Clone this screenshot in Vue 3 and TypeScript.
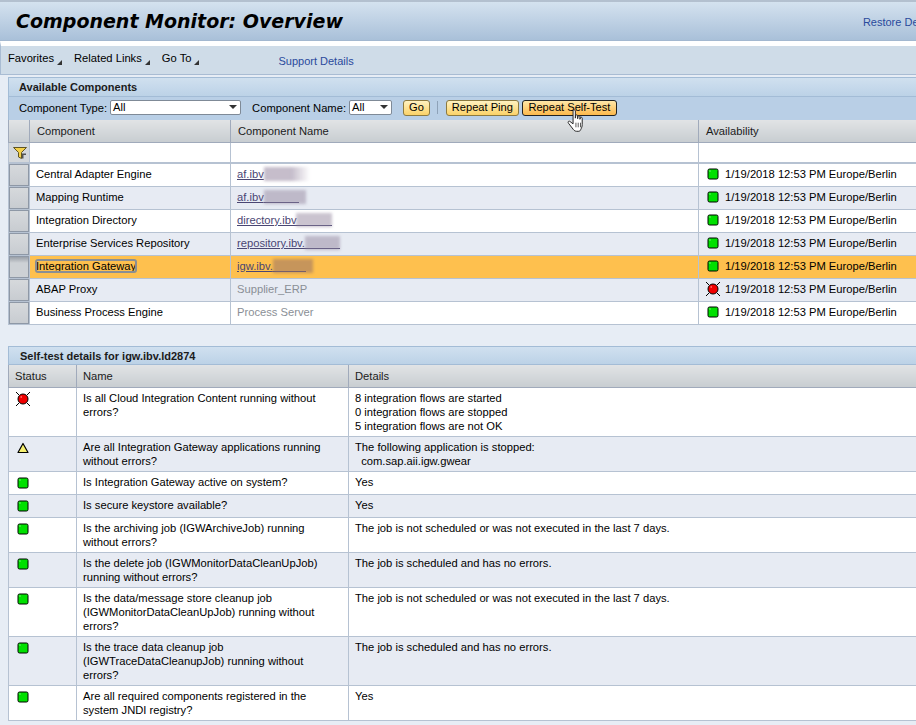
<template>
  <div class="page">
    <header class="title-bar">
      <h1 class="page-title">Component Monitor: Overview</h1>
      <a class="restore-link">Restore Default View</a>
    </header>

    <nav class="menu-bar">
      <div class="menu-items">
        <span v-for="item in menuItems" :key="item" class="menu-item">
          {{ item }}<i class="menu-arrow"></i>
        </span>
      </div>
      <a class="support-link">Support Details</a>
    </nav>

    <section class="panel components-panel">
      <div class="panel-title">Available Components</div>
      <div class="toolbar">
        <label class="field-label">Component Type:</label>
        <div class="select select-type">All<i class="select-arrow"></i></div>
        <label class="field-label field-name">Component Name:</label>
        <div class="select select-name">All<i class="select-arrow"></i></div>
        <button type="button" class="btn btn-go">Go</button>
        <span class="toolbar-sep"></span>
        <button type="button" class="btn">Repeat Ping</button>
        <button type="button" class="btn btn-hover">
          Repeat Self-Test
          <svg class="hand-cursor" width="19" height="24" viewBox="0 0 16 21">
            <path
              d="M5 1.500c0-1 2-1 2 0V8l.3-2.200c.2-1 1.700-.9 1.700.1V8.500l.3-2c.2-.9 1.700-.8 1.700.2v2.300l.4-1.300c.3-.8 1.600-.6 1.600.4v5.400c0 2-.6 3-1.300 4.500-.4 1-1 1.500-1.700 1.500H8c-1 0-2-.6-2.700-1.500L1 12.500c-.8-1-.1-2.200 1-1.800L5 13z"
              fill="#fff"
              stroke="#222"
              stroke-width=".85"
            />
            <path d="M7.500 12v4M9.500 12v4M11.500 12v4" stroke="#333" stroke-width=".7" />
          </svg>
        </button>
      </div>

      <table class="grid comp-grid">
        <colgroup>
          <col class="c-sel" />
          <col class="c-comp" />
          <col class="c-name" />
          <col />
        </colgroup>
        <thead>
          <tr>
            <th class="sel-head"></th>
            <th>Component</th>
            <th>Component Name</th>
            <th>Availability</th>
          </tr>
        </thead>
        <tbody>
          <tr class="filter-row">
            <td class="filter-cell">
              <svg class="filter-icon" width="14" height="12" viewBox="0 0 14 12">
                <path d="M.5.5h13L8.500 5.500V11.500L5.500 10V5.500z" fill="#f4d04a" stroke="#5f5422" stroke-width="1" />
                <path d="M9 6.500h4V8h-2.500v3.500H9z" fill="#555" />
              </svg>
            </td>
            <td></td>
            <td></td>
            <td></td>
          </tr>
          <tr
            v-for="(row, i) in components"
            :key="row.type"
            :class="{ alt: i % 2 === 1, selected: row.selected }"
          >
            <td class="sel-cell"><span class="sel-btn"></span></td>
            <td>
              <span :class="{ focused: row.selected }">{{ row.type }}</span>
            </td>
            <td>
              <span v-if="row.link" class="comp-link">
                {{ row.name }}<i
                  class="masked"
                  :style="{ width: row.blur + 'px', backgroundSize: row.line + 'px 1px' }"
                ><i class="smudge" :class="{ fade: row.line === 0 }"></i></i>
              </span>
              <span v-else class="muted">{{ row.name }}</span>
            </td>
            <td class="avail-cell">
              <StatusIcon :kind="row.status" />
              <span>1/19/2018 12:53 PM Europe/Berlin</span>
            </td>
          </tr>
        </tbody>
      </table>
    </section>

    <section class="panel details-panel">
      <div class="panel-title">Self-test details for igw.ibv.ld2874</div>
      <table class="grid detail-grid">
        <colgroup>
          <col class="c-status" />
          <col class="c-check" />
          <col />
        </colgroup>
        <thead>
          <tr>
            <th>Status</th>
            <th>Name</th>
            <th>Details</th>
          </tr>
        </thead>
        <tbody>
          <tr v-for="(row, i) in details" :key="row.check" :class="{ alt: i % 2 === 1 }">
            <td class="status-cell"><StatusIcon :kind="row.status" /></td>
            <td class="check-cell">{{ row.check }}</td>
            <td class="detail-cell">{{ row.detail }}</td>
          </tr>
        </tbody>
      </table>
    </section>
  </div>
</template>

<script setup lang="ts">
import { h } from 'vue';

type Status = 'ok' | 'warn' | 'error';

// small traffic light icons used in both tables
function StatusIcon(props: { kind: Status }) {
  if (props.kind === 'ok') {
    return h('svg', { width: 12, height: 12, viewBox: '0 0 12 12', class: 'status-icon' }, [
      h('rect', { x: 1, y: 1, width: 10, height: 10, rx: 1.5, fill: '#00e000', stroke: '#000', 'stroke-width': 1 }),
      h('rect', { x: 2.5, y: 2.5, width: 1, height: 1, fill: '#c8ffc8' }),
    ]);
  }
  if (props.kind === 'warn') {
    return h('svg', { width: 12, height: 12, viewBox: '0 0 12 12', class: 'status-icon' }, [
      h('path', { d: 'M6 1.500 11 10.500H1z', fill: '#f6f070', stroke: '#000', 'stroke-width': 1.2, 'stroke-linejoin': 'round' }),
    ]);
  }
  return h('svg', { width: 14, height: 14, viewBox: '0 0 14 14', class: 'status-icon status-icon--error' }, [
    h('path', { d: 'M0 0l3 3M14 0l-3 3M0 14l3-3M14 14l-3-3', stroke: '#000', 'stroke-width': 1 }),
    h('circle', { cx: 7, cy: 7, r: 5, fill: '#f00000', stroke: '#000', 'stroke-width': 1 }),
    h('rect', { x: 4.5, y: 4.5, width: 1.5, height: 1, fill: '#ffb0b0' }),
  ]);
}
StatusIcon.props = ['kind'];

const menuItems = ['Favorites', 'Related Links', 'Go To'];

const components = [
  { type: 'Central Adapter Engine', name: 'af.ibv', link: true, blur: 46, line: 0, status: 'ok' as Status },
  { type: 'Mapping Runtime', name: 'af.ibv', link: true, blur: 42, line: 35, status: 'ok' as Status },
  { type: 'Integration Directory', name: 'directory.ibv', link: true, blur: 36, line: 36, status: 'ok' as Status },
  { type: 'Enterprise Services Repository', name: 'repository.ibv.', link: true, blur: 35, line: 35, status: 'ok' as Status },
  { type: 'Integration Gateway', name: 'igw.ibv.', link: true, blur: 40, line: 33, status: 'ok' as Status, selected: true },
  { type: 'ABAP Proxy', name: 'Supplier_ERP', link: false, blur: 0, line: 0, status: 'error' as Status },
  { type: 'Business Process Engine', name: 'Process Server', link: false, blur: 0, line: 0, status: 'ok' as Status },
];

const notScheduled = 'The job is not scheduled or was not executed in the last 7 days.';
const scheduled = 'The job is scheduled and has no errors.';

const details: { status: Status; check: string; detail: string }[] = [
  {
    status: 'error',
    check: 'Is all Cloud Integration Content running without errors?',
    detail: '8 integration flows are started\n0 integration flows are stopped\n5 integration flows are not OK',
  },
  {
    status: 'warn',
    check: 'Are all Integration Gateway applications running without errors?',
    detail: 'The following application is stopped:\n  com.sap.aii.igw.gwear',
  },
  { status: 'ok', check: 'Is Integration Gateway active on system?', detail: 'Yes' },
  { status: 'ok', check: 'Is secure keystore available?', detail: 'Yes' },
  { status: 'ok', check: 'Is the archiving job (IGWArchiveJob) running without errors?', detail: notScheduled },
  { status: 'ok', check: 'Is the delete job (IGWMonitorDataCleanUpJob) running without errors?', detail: scheduled },
  {
    status: 'ok',
    check: 'Is the data/message store cleanup job (IGWMonitorDataCleanUpJob) running without errors?',
    detail: notScheduled,
  },
  {
    status: 'ok',
    check: 'Is the trace data cleanup job (IGWTraceDataCleanupJob) running without errors?',
    detail: scheduled,
  },
  { status: 'ok', check: 'Are all required components registered in the system JNDI registry?', detail: 'Yes' },
];
</script>

<style>
html,
body {
  margin: 0;
  overflow: hidden;
  background: #e7edf5;
}
</style>

<style scoped>
.page {
  width: 916px;
  height: 725px;
  overflow: hidden;
  background: #e7edf5;
  font-family: 'Liberation Sans', Arial, sans-serif;
  font-size: 11.2px;
  color: #000;
}

.title-bar {
  width: 916px;
  height: 41px;
  box-sizing: border-box;
  display: flex;
  align-items: center;
  justify-content: space-between;
  padding-left: 16px;
  border-top: 2px solid #b3c0cf;
  border-bottom: 1px solid #a3b8d0;
  background: linear-gradient(#d4e2ef, #a9c0d9);
  overflow: hidden;
  white-space: nowrap;
}

.page-title {
  margin: 0;
  font-family: 'DejaVu Sans', Verdana, sans-serif;
  font-size: 19px;
  font-weight: 700;
  font-style: italic;
}

.restore-link {
  margin: 2px -50px 0 0;
  color: #2a4a9c;
  font-size: 11px;
}

.menu-bar {
  height: 34px;
  width: 916px;
  box-sizing: border-box;
  display: flex;
  background: #cfdce8;
  border-top: 5px solid #fff;
  border-left: 1px solid #a9bcd3;
  border-bottom: 1px solid #a9bcd3;
}

.menu-items {
  display: flex;
  align-items: flex-start;
  gap: 12px;
  padding: 5px 0 0 7px;
}

.menu-item {
  position: relative;
  padding-right: 8px;
  line-height: 14px;
}

.menu-arrow {
  position: absolute;
  right: 0;
  bottom: 0;
  width: 0;
  height: 0;
  border-left: 5px solid transparent;
  border-bottom: 5px solid #333;
}

.support-link {
  margin-left: 79px;
  padding-top: 8px;
  color: #2a4a9c;
  font-size: 11px;
  line-height: 14px;
}

.panel {
  margin-left: 8px;
  width: 1000px;
}

.components-panel {
  margin-top: 2px;
}

.components-panel .panel-title {
  height: 20px;
  padding-left: 10px;
}

.details-panel {
  margin-top: 21px;
}

.panel-title {
  height: 19px;
  box-sizing: border-box;
  padding-left: 11px;
  border: 1px solid #a3bcd6;
  border-right: none;
  background: linear-gradient(#d0e0ef, #bcd2e7);
  font-size: 11px;
  font-weight: 700;
  line-height: 18px;
  color: #1b1b1b;
}

.toolbar {
  height: 23px;
  box-sizing: border-box;
  display: flex;
  align-items: center;
  padding: 0 0 2px 10px;
  background: #b9cfe6;
  border-left: 1px solid #a3bcd6;
}

.field-label {
  margin-right: 3px;
}

.field-name {
  margin-left: 11px;
}

.select {
  position: relative;
  height: 15px;
  box-sizing: border-box;
  background: #fff;
  border: 1px solid #7f8a97;
  border-radius: 2px;
  padding-left: 2px;
  line-height: 12px;
}

.select-type {
  width: 131px;
}

.select-name {
  width: 43px;
}

.select-arrow {
  position: absolute;
  right: 3px;
  top: 4px;
  width: 0;
  height: 0;
  border-left: 4px solid transparent;
  border-right: 4px solid transparent;
  border-top: 4px solid #333;
}

.btn {
  position: relative;
  height: 16px;
  box-sizing: border-box;
  padding: 0 5px;
  margin-right: 3px;
  border: 1px solid #8c7a40;
  border-radius: 3px;
  background: linear-gradient(#fff2c0, #fbd268);
  font-family: inherit;
  font-size: 11.1px;
  line-height: 13px;
  color: #000;
}

.btn-go {
  margin-left: 11px;
  margin-right: 0;
}

.btn-hover {
  border-color: #222;
  padding: 0 5.5px;
  background: linear-gradient(#ffe6a8, #fcb94c);
}

.hand-cursor {
  position: absolute;
  left: 44px;
  top: 8px;
}

.toolbar-sep {
  width: 1px;
  height: 13px;
  margin: 0 8px 0 7px;
  background: #8ea2b8;
}

.grid {
  width: 100%;
  table-layout: fixed;
  border-collapse: collapse;
  background: #fff;
}

.grid th {
  height: 22px;
  padding: 0 0 0 7px;
  box-sizing: border-box;
  text-align: left;
  font-size: 11.2px;
  font-weight: 400;
  color: #1b1b1b;
  background: linear-gradient(#e1e3e5, #c8cdd1);
  border: 1px solid #a0aabb;
  border-top: none;
  white-space: nowrap;
}

.detail-grid th {
  padding-left: 6px;
}

.grid td {
  box-sizing: border-box;
  padding: 0 0 0 6px;
  font-size: 11.2px;
  border: 1px solid #b6c2d2;
  vertical-align: middle;
  white-space: nowrap;
}

.alt td {
  background: #e7ebf3;
}

.selected td {
  background: #fec04e;
}

.c-sel {
  width: 21px;
}

.c-comp {
  width: 201px;
}

.c-name {
  width: 468px;
}

.comp-grid tbody tr {
  height: 23px;
}

.comp-grid td {
  padding-bottom: 2px;
}

.comp-grid .filter-row {
  height: 21px;
}

.filter-row td {
  border-bottom: 2px solid #b6c2d2;
}

.grid .filter-cell {
  padding: 1px 0 0 4px;
  background: #d3d7db;
}

.filter-icon {
  display: block;
}

.grid .sel-cell {
  padding: 0;
  background: #d3d7db;
}

.sel-btn {
  display: block;
  height: 22px;
  box-sizing: border-box;
  border: 1px solid #8e98a6;
  background: linear-gradient(#d6d9dc, #c8ccd1);
}

.selected .sel-btn {
  background: linear-gradient(#9aa0a8, #cdd1d5 30%);
}

.focused {
  outline: 2px solid #8a8f94;
  outline-offset: -1px;
  border-radius: 2px;
}

.comp-link {
  color: #4a4673;
  text-decoration: underline;
}

/* the hidden part of a host name: underline stays, letters are smudged */
.masked {
  display: inline-block;
  height: 14px;
  vertical-align: -3px;
  background: linear-gradient(#4a4673, #4a4673) no-repeat left 12px;
}

.smudge {
  display: block;
  height: 14px;
  background: rgba(150, 135, 160, 0.5);
  filter: blur(1.5px);
}

.smudge.fade {
  background: linear-gradient(to right, rgba(150, 135, 160, 0.55) 60%, rgba(150, 135, 160, 0));
}

.selected .smudge {
  background: rgba(160, 120, 100, 0.6);
}

.muted {
  color: #8a8f96;
}

.grid .avail-cell {
  padding-left: 8px;
}

.avail-cell span {
  margin-left: 6px;
}

.status-icon {
  vertical-align: -2px;
}

.status-icon--error {
  margin: 0 -1px;
  vertical-align: -3px;
}

.c-status {
  width: 68px;
}

.c-check {
  width: 272px;
}

.detail-grid tbody tr {
  height: 23px;
}

.detail-grid td {
  vertical-align: top;
  padding-top: 3px;
  padding-bottom: 3px;
  line-height: 14px;
}

.grid .check-cell {
  white-space: normal;
  padding-right: 12px;
}

.grid .detail-cell {
  white-space: pre-wrap;
}

.grid .status-cell {
  padding-left: 8px;
  padding-top: 5px;
}

.status-cell .status-icon {
  display: block;
}

.status-cell .status-icon--error {
  margin: -1px -1px 0;
}
</style>
